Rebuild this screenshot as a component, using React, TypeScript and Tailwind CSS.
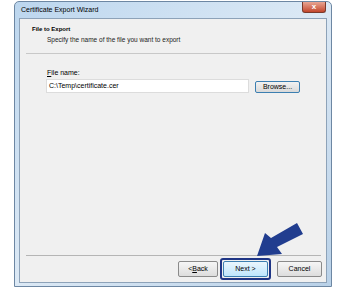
import React from 'react';

const font = { fontFamily: '"Liberation Sans", Arial, sans-serif' };

function WinButton({ children, primary, w = 'w-[45px]' }: { children: React.ReactNode; primary?: boolean; w?: string }) {
  return (
    <div
      className={`flex h-[16px] ${w} items-center justify-center rounded-[2px] border text-[7px] text-black ${
        primary
          ? 'border-[#3c7fb1] bg-gradient-to-b from-[#eaf6fd] to-[#bee6fd]'
          : 'border-[#8a8a8a] bg-gradient-to-b from-[#f6f6f6] to-[#dddddd]'
      }`}
    >
      {children}
    </div>
  );
}

export default function App() {
  return (
    <div className="relative h-[290px] w-[347px] bg-white pl-[14px] pt-[1px]" style={font}>
      <div className="flex h-[286px] w-[318px] flex-col rounded-t-[5px] border border-[#6d87a3] bg-gradient-to-br from-[#bcd6ee] via-[#dce9f5] to-[#b9d1e8]">
        {/* title bar */}
        <div className="flex h-[16px] items-start">
          <div className="pl-[6px] pt-[4px] text-[7px] leading-[8px] text-black">Certificate Export Wizard</div>
          <div className="ml-auto mr-[5px] flex h-[11px] w-[24px] items-center justify-center rounded-b-[3px] border border-t-0 border-[#7a3a2c] bg-gradient-to-b from-[#e8a593] to-[#c2452b] text-[8px] font-bold leading-none text-white">
            x
          </div>
        </div>

        {/* client */}
        <div className="mx-[4px] mb-[3px] flex flex-1 flex-col border border-[#8da2b8] bg-[#f0f0f0]">
          <div className="pl-[12px] pt-[6px] text-[6px] font-bold leading-[8px] text-black">File to Export</div>
          <div className="pl-[27px] pt-[3px] text-[6.5px] leading-[8px] text-[#222]">Specify the name of the file you want to export</div>
          <div className="ml-[6px] mr-[5px] mt-[9px] h-px bg-[#c8c8c8]" />

          <div className="pl-[27px] pt-[15px] text-[7px] leading-[8px] text-black">
            <span className="underline">F</span>ile name:
          </div>
          <div className="flex items-end pl-[26px] pt-[2px]">
            <div className="flex h-[14px] w-[203px] items-center border border-[#dcdcdc] bg-white pl-[2px] text-[7px] text-black">
              C:\Temp\certificate.cer
            </div>
            <div className="ml-[6px] flex h-[12px] w-[45px] items-center justify-center rounded-[2px] border border-[#3c7fb1] bg-gradient-to-b from-[#f2f2f2] to-[#d9d9d9] text-[7px] text-black">
              Browse...
            </div>
          </div>

          <div className="flex-1" />
          <div className="ml-[6px] mr-[5px] h-px bg-[#b5b5b5]" />
          <div className="flex items-center justify-end pb-[5px] pr-[4px] pt-[5px]">
            <WinButton w="w-[40px]">
              &lt; <span className="underline">B</span>ack
            </WinButton>
            <div className="-my-[3px] ml-[2px] mr-[6px] rounded-[3px] border-2 border-[#1f3585] p-[1px]">
              <WinButton primary>Next &gt;</WinButton>
            </div>
            <WinButton>Cancel</WinButton>
          </div>
        </div>
      </div>

      {/* annotation arrow */}
      <svg className="absolute left-[250px] top-[218px]" width="60" height="45" viewBox="250 218 60 45">
        <polygon points="297,223 303,234 277,247 282,254 257,256 265,233 271,238" fill="#213d8f" />
      </svg>
    </div>
  );
}
